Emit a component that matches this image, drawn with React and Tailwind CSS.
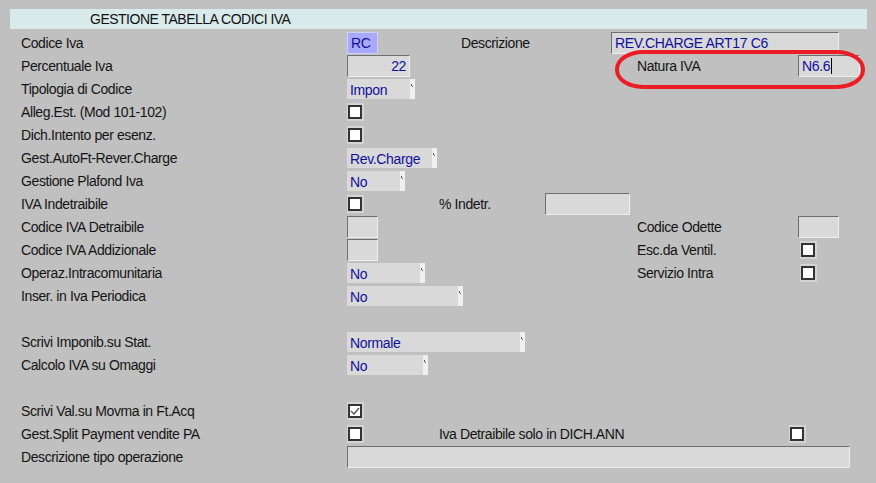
import React from "react";

const FONT = { fontFamily: '"Liberation Sans", Arial, sans-serif' };

const Label = ({ w, children }) => (
  <div className={`${w} shrink-0 whitespace-nowrap pt-[2px] text-[14px] tracking-[-0.4px] text-[#141414]`}>{children}</div>
);

const Field = ({ w, children, right, caret }) => (
  <div
    className={`${w} h-[22px] shrink-0 bg-[#d9d9d9] border-t border-l border-[#6f6f6f] border-r-[#eeeeee] border-b-[#eeeeee] border-r border-b flex items-center px-[3px] pt-px text-[14px] tracking-[-0.35px] text-[#10109c] ${right ? "justify-end" : ""}`}
  >
    {children}
    {caret && <span className="w-px h-[16px] bg-black ml-px" />}
  </div>
);

const Select = ({ w, value }) => (
  <div className={`${w} h-[20px] shrink-0 bg-[#d9d9d9] flex text-[14px] tracking-[-0.35px] text-[#10109c]`}>
    <div className="flex-1 pl-[3px] pt-px leading-[20px]">{value}</div>
    <div className="w-[5px] h-full bg-[#f0f0f0] flex justify-center pt-[5px]">
      <svg width="3" height="4" viewBox="0 0 3 4">
        <path d="M0 0h1v2h1v1H1V2H0z" fill="#555" />
      </svg>
    </div>
  </div>
);

const Check = ({ checked }) => (
  <div className="w-[17px] h-[18px] shrink-0 bg-[#d4d4d4] flex items-center pl-px">
    <div className="w-[14px] h-[14px] border-2 border-[#333] bg-white flex items-center justify-center">
      {checked && (
        <svg width="10" height="10" viewBox="0 0 10 10">
          <path d="M1 5l3 3 5-6" fill="none" stroke="#555" strokeWidth="1.4" />
        </svg>
      )}
    </div>
  </div>
);

const Row = ({ label, children }) => (
  <div className="flex h-[23px] items-center">
    <Label w="w-[347px] pl-[21px]">{label}</Label>
    {children}
  </div>
);

export default function App() {
  return (
    <div className="w-[876px] h-[483px] bg-[#c0c0c0] overflow-hidden relative" style={FONT}>
      <div className="mt-[9px] ml-[10px] w-[857px] h-[20px] bg-[#d8eaea] flex items-center pl-[80px] pt-px text-[14px] tracking-[-0.5px] text-[#111]">
        GESTIONE TABELLA CODICI IVA
      </div>
      <div className="mt-[2px]">
        <Row label="Codice Iva">
          <div className="w-[114px] shrink-0">
            <div className="w-[31px] h-[22px] bg-[#a9a9fc] border border-[#d0d0f4] flex items-center pl-[3px] pt-px text-[14px] tracking-[-0.35px] text-[#10109c]">
              RC
            </div>
          </div>
          <Label w="w-[150px]">Descrizione</Label>
          <Field w="w-[228px]">REV.CHARGE ART17 C6</Field>
        </Row>
        <Row label="Percentuale Iva">
          <div className="w-[290px] shrink-0">
            <Field w="w-[63px]" right>22</Field>
          </div>
          <Label w="w-[161px]">Natura IVA</Label>
          <Field w="w-[62px]" caret>N6.6</Field>
        </Row>
        <Row label="Tipologia di Codice">
          <Select w="w-[68px]" value="Impon" />
        </Row>
        <Row label="Alleg.Est. (Mod 101-102)">
          <Check />
        </Row>
        <Row label="Dich.Intento per esenz.">
          <Check />
        </Row>
        <Row label="Gest.AutoFt-Rever.Charge">
          <Select w="w-[90px]" value="Rev.Charge" />
        </Row>
        <Row label="Gestione Plafond Iva">
          <Select w="w-[58px]" value="No" />
        </Row>
        <Row label="IVA Indetraibile">
          <div className="w-[92px] shrink-0">
            <Check />
          </div>
          <Label w="w-[106px]">% Indetr.</Label>
          <Field w="w-[85px]" />
        </Row>
        <Row label="Codice IVA Detraibile">
          <div className="w-[290px] shrink-0">
            <Field w="w-[31px]" />
          </div>
          <Label w="w-[161px]">Codice Odette</Label>
          <Field w="w-[41px]" />
        </Row>
        <Row label="Codice IVA Addizionale">
          <div className="w-[290px] shrink-0">
            <Field w="w-[31px]" />
          </div>
          <Label w="w-[163px]">Esc.da Ventil.</Label>
          <Check />
        </Row>
        <Row label="Operaz.Intracomunitaria">
          <div className="w-[290px] shrink-0">
            <Select w="w-[78px]" value="No" />
          </div>
          <Label w="w-[163px]">Servizio Intra</Label>
          <Check />
        </Row>
        <Row label="Inser. in Iva Periodica">
          <Select w="w-[116px]" value="No" />
        </Row>
        <div className="h-[23px]" />
        <Row label="Scrivi Imponib.su Stat.">
          <Select w="w-[178px]" value="Normale" />
        </Row>
        <Row label="Calcolo IVA su Omaggi">
          <Select w="w-[81px]" value="No" />
        </Row>
        <div className="h-[23px]" />
        <Row label="Scrivi Val.su Movma in Ft.Acq">
          <Check checked />
        </Row>
        <Row label="Gest.Split Payment vendite PA">
          <div className="w-[92px] shrink-0">
            <Check />
          </div>
          <Label w="w-[350px]">Iva Detraibile solo in DICH.ANN</Label>
          <Check />
        </Row>
        <Row label="Descrizione tipo operazione">
          <Field w="w-[503px]" />
        </Row>
      </div>
      <div className="absolute left-[615px] top-[50px] w-[250px] h-[39px] border-[4px] border-[#ec1c24] rounded-[28px/19px] pointer-events-none" />
    </div>
  );
}
